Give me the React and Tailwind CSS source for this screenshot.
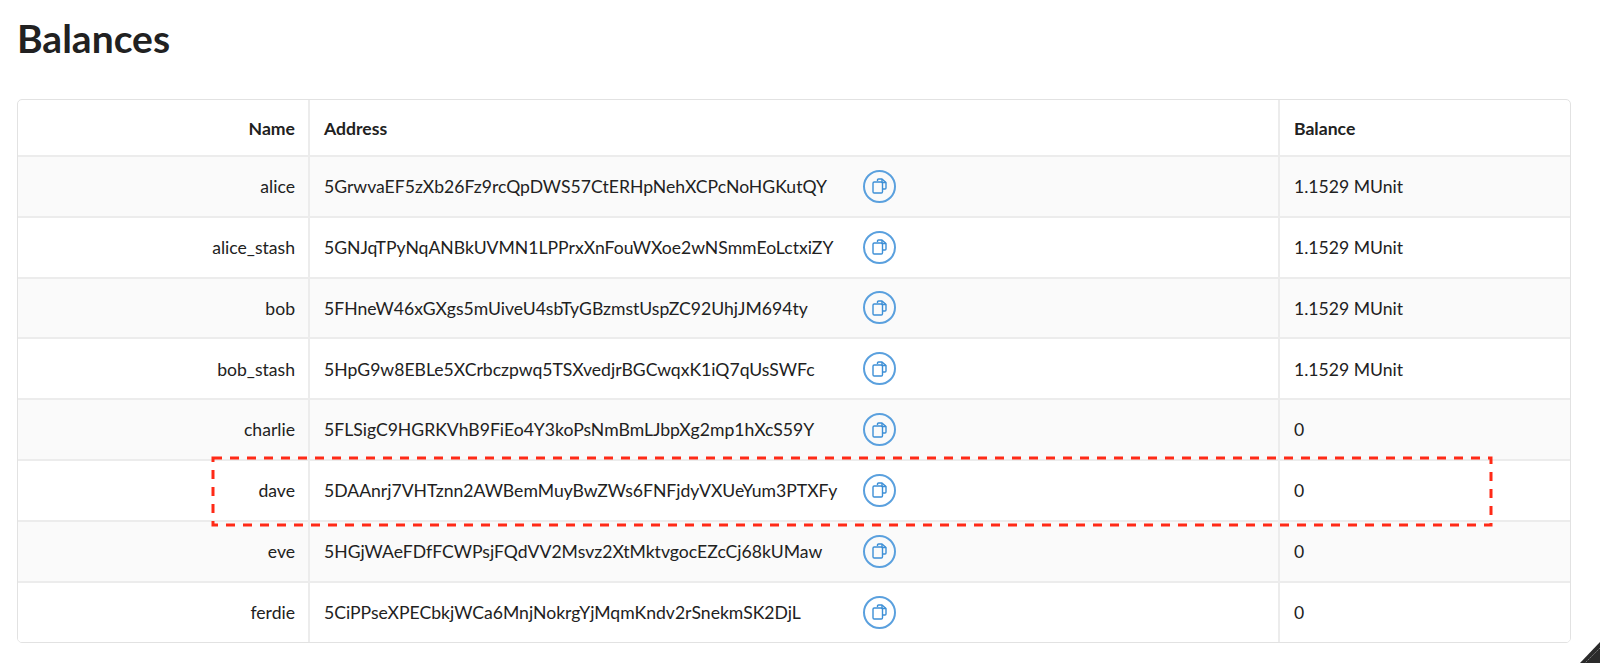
import React from 'react';

const rows = [
  { name: 'alice', address: '5GrwvaEF5zXb26Fz9rcQpDWS57CtERHpNehXCPcNoHGKutQY', balance: '1.1529 MUnit' },
  { name: 'alice_stash', address: '5GNJqTPyNqANBkUVMN1LPPrxXnFouWXoe2wNSmmEoLctxiZY', balance: '1.1529 MUnit' },
  { name: 'bob', address: '5FHneW46xGXgs5mUiveU4sbTyGBzmstUspZC92UhjJM694ty', balance: '1.1529 MUnit' },
  { name: 'bob_stash', address: '5HpG9w8EBLe5XCrbczpwq5TSXvedjrBGCwqxK1iQ7qUsSWFc', balance: '1.1529 MUnit' },
  { name: 'charlie', address: '5FLSigC9HGRKVhB9FiEo4Y3koPsNmBmLJbpXg2mp1hXcS59Y', balance: '0' },
  { name: 'dave', address: '5DAAnrj7VHTznn2AWBemMuyBwZWs6FNFjdyVXUeYum3PTXFy', balance: '0' },
  { name: 'eve', address: '5HGjWAeFDfFCWPsjFQdVV2Msvz2XtMktvgocEZcCj68kUMaw', balance: '0' },
  { name: 'ferdie', address: '5CiPPseXPECbkjWCa6MnjNokrgYjMqmKndv2rSnekmSK2DjL', balance: '0' },
];

const CopyButton = () => (
  <button className="flex h-[33px] w-[33px] items-center justify-center rounded-full border-2 border-[#5aa0de] text-[#3d8fd6]">
    <svg width="15" height="16" viewBox="0 0 15 16" fill="none" stroke="currentColor" strokeWidth="1.4" strokeLinejoin="round">
      {/* back page */}
      <path d="M5.5 3V2a1 1 0 0 1 1-1h3.5L14 4.5V10a1 1 0 0 1-1 1h-2.5" />
      <path d="M10 1v3.5H14" />
      {/* front page */}
      <rect x="1" y="4" width="9.5" height="11" rx="1.2" />
    </svg>
  </button>
);

const App = () => {
  return (
    <div className="relative h-[663px] overflow-hidden bg-white px-[17px] font-['Lato','Liberation_Sans',sans-serif] text-[#212121]">
      <h1 className="h-[99px] pt-[14px] text-[39px] font-bold leading-[48px]">Balances</h1>

      <div className="w-[1554px] overflow-hidden rounded-[5px] border-[1.5px] border-[#e2e2e2]">
        <table className="w-full table-fixed border-collapse text-[17.6px]">
          <thead>
            <tr className="h-[56px]">
              <th className="w-[291px] border-r-2 border-[#ececec] pl-[14px] pr-[13px] pt-[3px] text-right font-bold">Name</th>
              <th className="border-r-2 border-[#ececec] px-[14px] pt-[3px] text-left font-bold">Address</th>
              <th className="w-[291px] px-[14px] pt-[3px] text-left font-bold">Balance</th>
            </tr>
          </thead>
          <tbody>
            {rows.map((row, i) => (
              <tr key={row.name} className={`h-[60.8px] border-t-2 border-[#ececec] ${i % 2 === 0 ? 'bg-[#fafafa]' : 'bg-white'}`}>
                <td className="border-r-2 border-[#ececec] pl-[14px] pr-[13px] pt-[2px] text-right">{row.name}</td>
                <td className="border-r-2 border-[#ececec] px-[14px]">
                  <div className="flex items-center">
                    <span className="w-[539px] pt-[2px]">{row.address}</span>
                    <CopyButton />
                  </div>
                </td>
                <td className="px-[14px] pt-[2px]">{row.balance}</td>
              </tr>
            ))}
          </tbody>
        </table>
      </div>

      {/* annotation over the dave row */}
      <svg className="absolute left-[211px] top-[456px]" width="1282" height="71" fill="none">
        <rect x="2" y="2" width="1278" height="67" stroke="#ff2a17" strokeWidth="3" strokeDasharray="9 8" />
      </svg>

      {/* corner of the window behind */}
      <svg className="absolute bottom-0 right-0" width="20" height="21">
        <path d="M20 0V21H0Z" fill="#2a2a2a" />
        <path d="M20 6L5 21" stroke="#777" strokeWidth="1" strokeDasharray="2 1" />
      </svg>
    </div>
  );
};

export default App;
